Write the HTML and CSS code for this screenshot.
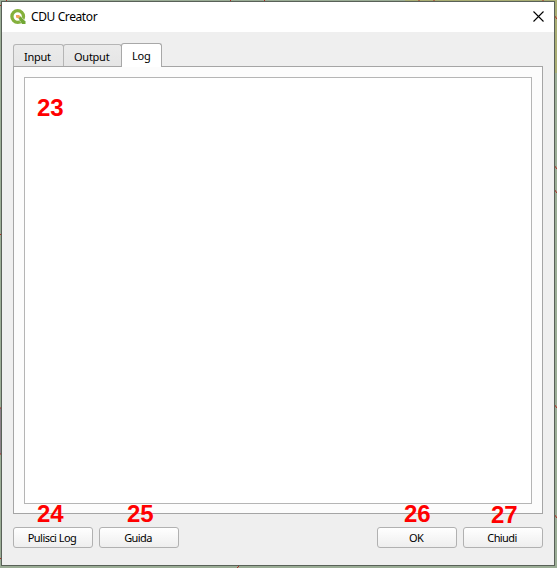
FILE: index.html
```
<!DOCTYPE html>
<html lang="it">
<head>
<meta charset="utf-8">
<title>CDU Creator</title>
<link rel="stylesheet" href="styles.css">
</head>
<body>
<svg class="map" width="557" height="568" viewBox="0 0 557 568" aria-hidden="true">
  <path fill="#9bad96" d="M0 0h557v568H0z"/>
  <path fill="#a9ad73" d="M405 0h152v73H405z"/>
  <path fill="#8b8189" d="M0 408h2v46H0z"/>
  <path fill="none" stroke="#b02b24" d="M0 5.500h2M6.500 0v2M230.500 0v2M264.500 0v2M419 0v2M434 0v2M543 0v2M0 234.500h2M0 408h2M0 454h2M0 558.500h2M554 15l3 4M554 165l3 4M554 189l3 4M554 404l3 4M554 514l3 4M237 568l3-3"/>
</svg>
<main class="window">
  <header class="titlebar">
    <svg class="logo" width="17" height="17" viewBox="0 0 17 17" aria-hidden="true">
      <circle cx="7.700" cy="7.500" r="5.800" fill="none" stroke="#84b03c" stroke-width="3.300"/>
      <path d="M9.500 12l2.500-3.500 4 4-3 3z" fill="#fff"/>
      <path d="M8 8.500l2-1.500 5.500 5.500v2.500H12z" fill="#71a735"/>
      <path d="M6 6h3l1.500 1.500-2 2L6 8.500z" fill="#f0a45c"/>
    </svg>
    <h1 class="title">CDU Creator</h1>
    <svg class="close" width="11" height="11" viewBox="0 0 11 11" role="img" aria-label="Chiudi"><path d="M.5.5l10 10M10.500.5l-10 10" stroke="#000" stroke-width="1.100"/></svg>
  </header>
  <div class="content">
    <nav class="tabs">
      <div class="tab input"><span>Input</span></div>
      <div class="tab output"><span>Output</span></div>
      <div class="tab active"><span>Log</span></div>
    </nav>
    <section class="pane">
      <div class="log"><b class="mark m23">23</b></div>
    </section>
    <footer class="buttons">
      <button class="clear"><span>Pulisci Log</span><b class="mark">24</b></button>
      <button><span>Guida</span><b class="mark m25">25</b></button>
      <button class="ok"><span>OK</span><b class="mark m26">26</b></button>
      <button><span>Chiudi</span><b class="mark m27">27</b></button>
    </footer>
  </div>
</main>
</body>
</html>
```
FILE: styles.css
```
* { box-sizing: border-box; }
body { margin: 0; width: 557px; height: 568px; overflow: hidden; padding: 1px; }
.map { position: absolute; left: 0; top: 0; z-index: -1; }
.window { width: 554px; height: 565px; border: 1px solid #596158; background: #efefef; color: #000; }
.titlebar { height: 30px; background: #fff; display: flex; align-items: center; padding: 0 10px 0 8px; }
.logo { margin-top: 1px; }
.title { font: 12px/18px "Noto Sans", sans-serif; margin: 0 auto 0 4px; letter-spacing: -.4px; }
.close { margin-top: -2px; }
.content { padding: 11px 11px 0; font: 11px/16px "Noto Sans", sans-serif; }
.tabs { height: 24px; display: flex; align-items: flex-end; position: relative; z-index: 1; }
.tab { height: 22px; border: 1px solid #b5b5b5; border-bottom: 0; border-radius: 3px 3px 0 0; background: linear-gradient(#ebebeb, #e5e5e5); padding: 4px 0 0 10px; margin-bottom: 1px; letter-spacing: -.25px; }
.input { width: 51px; }
.output { width: 59px; margin-left: -1px; }
.active { width: 41px; height: 24px; margin: 0 0 0 -1px; background: #fff; border-color: #a8a8a8; }
.pane { height: 448px; margin-top: -1px; padding: 10px; border: 1px solid #a5a5a5; background: #fcfcfc; }
.log { height: 427px; width: 508px; border: 1px solid #b5b5b5; background: #fff; position: relative; }
.buttons { display: flex; gap: 6px; margin-top: 13px; }
button { position: relative; width: 80px; height: 21px; border: 1px solid #b1b1b1; border-radius: 3px; background: linear-gradient(#fff, #eee); padding: 0 2px 0 0; font: inherit; color: #000; letter-spacing: -.6px; }
.clear { letter-spacing: -.55px; }
.ok { margin-left: auto; }
.mark { position: absolute; left: 23px; top: -28px; color: #f00; font: bold 24px/28px "Liberation Sans", sans-serif; letter-spacing: 0; }
.m23 { left: 12px; top: 16px; }
.m25 { left: 27px; }
.m26 { left: 26px; }
.m27 { left: 27px; top: -27px; }
```
